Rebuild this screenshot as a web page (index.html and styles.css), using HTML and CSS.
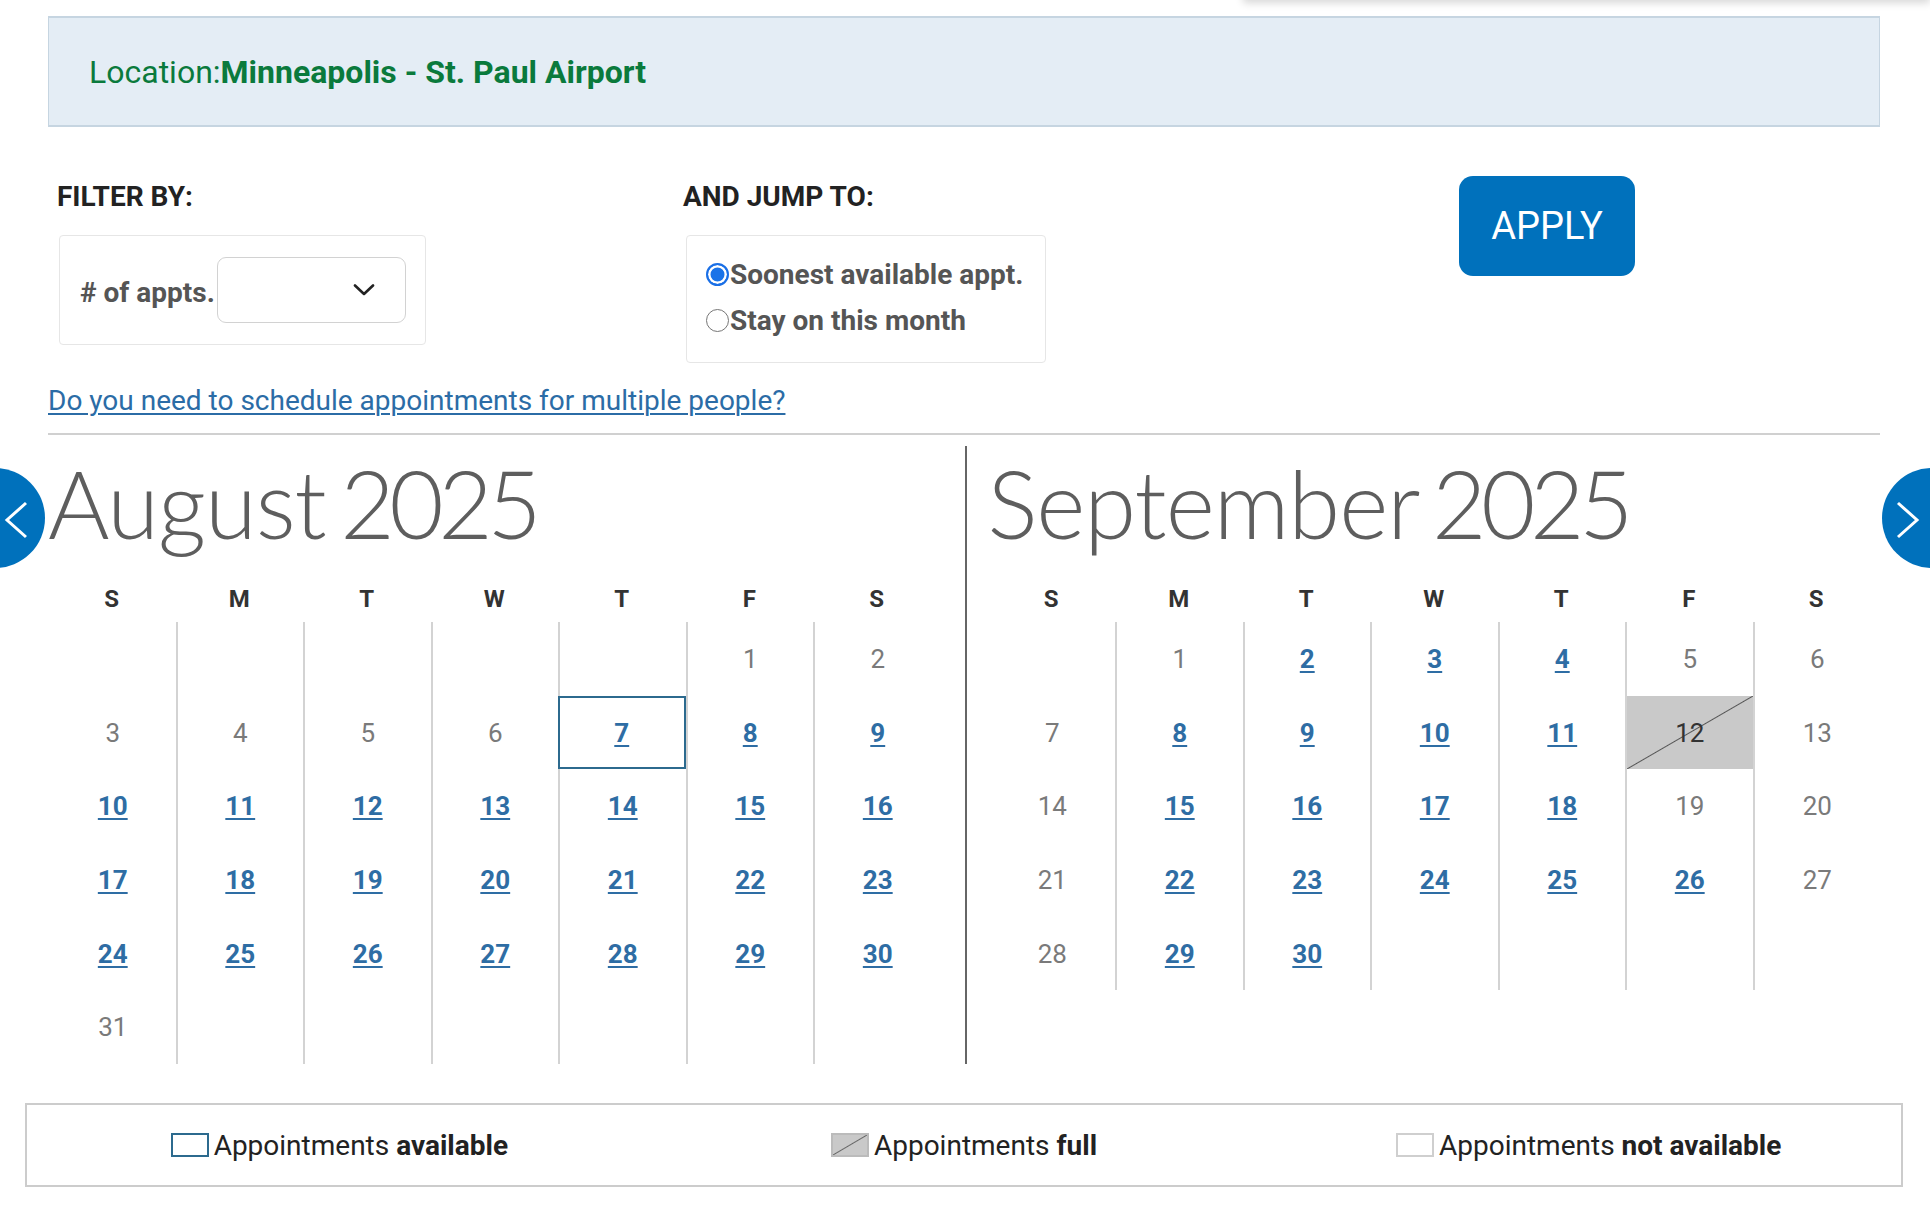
FILE: index.html
```html
<!DOCTYPE html>
<html lang="en">
<head>
  <meta charset="UTF-8">
  <title>Schedule an appointment</title>
  <link rel="stylesheet" href="styles.css">
</head>
<body>

  <div class="menu-shadow"></div>

  <main class="page">
    <div class="location">Location:<strong>Minneapolis - St. Paul Airport</strong></div>

    <form class="filters">
      <div class="filter-group filter-by">
        <h3>FILTER BY:</h3>
        <div class="filter-box">
          <label for="appts"># of appts.</label>
          <div class="select-wrap">
            <select id="appts"></select>
            <svg class="select-arrow" width="22" height="12" viewBox="0 0 22 12"><polyline points="2,1.5 11,10 20,1.5" fill="none" stroke="#222" stroke-width="2.6" stroke-linecap="round" stroke-linejoin="round"/></svg>
          </div>
        </div>
      </div>
      <div class="filter-group jump-to">
        <h3>AND JUMP TO:</h3>
        <div class="filter-box radios">
          <label><input type="radio" name="jump" value="soonest" checked>Soonest available appt.</label>
          <label><input type="radio" name="jump" value="stay">Stay on this month</label>
        </div>
      </div>
      <button type="button" class="apply">APPLY</button>
    </form>

    <a class="multi-link" href="#">Do you need to schedule appointments for multiple people?</a>

    <hr>

    <section class="calendar" id="calendar">
      <button type="button" class="nav prev" aria-label="Previous month">
        <svg width="100" height="100" viewBox="0 0 100 100"><polyline points="81,35 62,52 81,69" fill="none" stroke="#fff" stroke-width="3"/></svg>
      </button>
      <button type="button" class="nav next" aria-label="Next month">
        <svg width="100" height="100" viewBox="0 0 100 100"><polyline points="16,35 35,52 16,69" fill="none" stroke="#fff" stroke-width="3"/></svg>
      </button>
    </section>

    <div class="legend">
      <div class="legend-item"><span class="key key-open"></span>Appointments <b>available</b></div>
      <div class="legend-item"><span class="key key-full"></span>Appointments <b>full</b></div>
      <div class="legend-item"><span class="key key-none"></span>Appointments <b>not available</b></div>
    </div>
  </main>

  <script>
    var weekdays = ["S", "M", "T", "W", "T", "F", "S"];

    // start = weekday of the 1st, open = days with free slots
    var months = [
      {
        name: "August", year: 2025, start: 5, days: 31, rows: 6,
        open: [7, 8, 9, 10, 11, 12, 13, 14, 15, 16, 17, 18, 19, 20, 21, 22, 23, 24, 25, 26, 27, 28, 29, 30],
        full: [],
        selected: 7
      },
      {
        name: "September", year: 2025, start: 1, days: 30, rows: 5,
        open: [2, 3, 4, 8, 9, 10, 11, 15, 16, 17, 18, 22, 23, 24, 25, 26, 29, 30],
        full: [12],
        selected: null
      }
    ];

    function buildMonth(m) {
      var month = document.createElement("div");
      month.className = "month";

      var title = document.createElement("h2");
      title.className = "month-title";
      title.innerHTML = m.name + ' <span class="year">' + m.year + '</span>';
      month.appendChild(title);

      var head = document.createElement("div");
      head.className = "weekdays";
      weekdays.forEach(function(d) {
        var w = document.createElement("div");
        w.innerText = d;
        head.appendChild(w);
      });
      month.appendChild(head);

      var grid = document.createElement("div");
      grid.className = "days";
      for (var i = 0; i < m.rows * 7; i++) {
        var cell = document.createElement("div");
        cell.className = "day";
        var n = i - m.start + 1;
        if (n >= 1 && n <= m.days) {
          if (m.open.indexOf(n) >= 0) {
            var a = document.createElement("a");
            a.href = "#";
            a.innerText = n;
            cell.appendChild(a);
            if (n === m.selected) cell.className += " selected";
          } else {
            cell.innerText = n;
            cell.className += m.full.indexOf(n) >= 0 ? " full" : " closed";
          }
        }
        grid.appendChild(cell);
      }
      month.appendChild(grid);
      return month;
    }

    var calendar = document.getElementById("calendar");
    months.forEach(function(m) {
      calendar.appendChild(buildMonth(m));
    });
  </script>

</body>
</html>
```

FILE: styles.css
```css
body {
  font-family: Roboto, "Liberation Sans", Arial, sans-serif;
  background-color: #ffffff;
  color: #222;
  margin: 0;
  overflow-x: hidden;
}
.menu-shadow {
  position: absolute;
  top: -40px;
  left: 1243px;
  right: 0;
  height: 40px;
  background: #fff;
  box-shadow: 0 3px 8px rgba(0, 0, 0, 0.16);
}
.page {
  margin: 0 50px 0 48px;
}
.location {
  box-sizing: border-box;
  margin-top: 16px;
  height: 111px;
  display: flex;
  align-items: center;
  padding-left: 40px;
  background-color: #e4edf5;
  border: 2px solid #c6d5e1;
  border-left-width: 1px;
  border-right-width: 1px;
  color: #0a7a3c;
  font-size: 32px;
}
.location strong {
  font-weight: 700;
}
.filters {
  display: flex;
  align-items: flex-start;
  margin-top: 49px;
  padding-left: 9px;
}
.filter-group h3 {
  margin: 0 0 17px 0;
  font-size: 28px;
  line-height: 42px;
  font-weight: 700;
  color: #222;
}
.filter-by {
  width: 626px;
}
.jump-to {
  width: 776px;
}
.filter-box {
  box-sizing: border-box;
  border: 1px solid #e6e6e6;
  border-radius: 4px;
  margin-left: 2px;
}
.filter-by .filter-box {
  width: 367px;
  height: 110px;
  display: flex;
  align-items: center;
  padding: 0 20px 0 20px;
}
.filter-box label {
  font-size: 28px;
  font-weight: 700;
  color: #555;
  white-space: nowrap;
}
.filter-by label {
  flex: none;
  margin-top: 5px;
}
.select-wrap {
  position: relative;
  margin-left: 2px;
}
.select-wrap select {
  display: block;
  appearance: none;
  width: 189px;
  height: 66px;
  border: 1.5px solid #d2d2d2;
  border-radius: 9px;
  background: #fff;
}
.select-arrow {
  position: absolute;
  right: 31px;
  top: 27px;
}
.radios {
  width: 360px;
  height: 128px;
  padding: 15px 18px 19px 19px;
  margin-left: 3px;
}
.radios label {
  display: flex;
  align-items: center;
  height: 46px;
}
.radios input {
  appearance: none;
  box-sizing: border-box;
  flex: none;
  width: 23px;
  height: 23px;
  margin: 0 1px 0 0;
  border: 1.5px solid #767676;
  border-radius: 50%;
  background: #fff;
}
.radios input:checked {
  border: 2px solid #1a6fe6;
  background: #1a73e8;
  box-shadow: inset 0 0 0 2.5px #fff;
}
.apply {
  width: 176px;
  height: 100px;
  border: none;
  border-radius: 14px;
  background-color: #0071bc;
  color: #fff;
  font-family: Roboto, sans-serif;
  font-size: 38px;
  cursor: pointer;
}
.multi-link {
  display: block;
  width: fit-content;
  margin-top: 23px;
  font-size: 28px;
  line-height: 30px;
  color: #2b6ca6;
  text-decoration-thickness: 1.5px;
  text-underline-offset: 3px;
}
hr {
  margin: 17px 0 0 0;
  border: none;
  border-top: 2px solid #d0d0d0;
}
.calendar {
  position: relative;
  display: flex;
  margin-top: 11px;
}
.nav {
  position: absolute;
  top: 22px;
  width: 100px;
  height: 100px;
  padding: 0;
  border: none;
  border-radius: 50%;
  background-color: #0071bc;
  cursor: pointer;
  z-index: 2;
}
.nav svg {
  display: block;
}
.nav.prev {
  left: -103px;
}
.nav.next {
  right: -102px;
}
.month {
  flex: 1 1 0;
  box-sizing: border-box;
}
.month:nth-of-type(1) {
  padding-right: 24px;
}
.month:nth-of-type(2) {
  border-left: 2px solid #666;
  padding-left: 21px;
}
.month-title {
  margin: 0;
  padding-top: 2px;
  font-family: Lato, "Open Sans", sans-serif;
  font-weight: 300;
  font-size: 94px;
  line-height: 110px;
  color: #5e5e5e;
  letter-spacing: -1px;
  word-spacing: -10px;
  white-space: nowrap;
}
.month-title .year {
  letter-spacing: -5.5px;
}
.weekdays {
  display: grid;
  grid-template-columns: repeat(7, 1fr);
  padding-top: 18px;
  text-align: center;
  font-size: 24px;
  font-weight: 700;
  line-height: 46px;
  color: #333;
}
.days {
  display: grid;
  grid-template-columns: repeat(7, 1fr);
  grid-auto-rows: 73.7px;
}
.day {
  box-sizing: border-box;
  display: flex;
  align-items: center;
  justify-content: center;
  border-left: 2px solid #d3d3d3;
  font-size: 26px;
  color: #7a7a7a;
}
.day:nth-child(7n+1) {
  border-left-color: transparent;
}
.day a {
  font-weight: 700;
  color: #2e6da4;
  text-decoration-thickness: 2px;
  text-underline-offset: 3px;
}
.day.selected {
  border: 2px solid #2c6a8e;
}
.day.full {
  color: #333;
  background: linear-gradient(to bottom right, #c9c9c9 calc(50% - 1px), #555 50%, #c9c9c9 calc(50% + 1px));
  background-clip: padding-box;
}
.legend {
  box-sizing: border-box;
  display: flex;
  margin: 39px -23px 0 -23px;
  height: 84px;
  border: 2px solid #cccccc;
}
.legend-item {
  flex: 1 1 0;
  display: flex;
  align-items: center;
  justify-content: center;
  font-size: 28px;
  color: #222;
}
.legend-item b {
  margin-left: 7px;
}
.key {
  box-sizing: border-box;
  width: 38px;
  height: 24px;
  margin-right: 5px;
}
.key-open {
  border: 2px solid #2c6a8e;
}
.key-full {
  border: 2px solid #bbb;
  background: linear-gradient(to bottom right, #c9c9c9 calc(50% - 1px), #666 50%, #c9c9c9 calc(50% + 1px));
}
.key-none {
  border: 2px solid #cfcfcf;
}
```
